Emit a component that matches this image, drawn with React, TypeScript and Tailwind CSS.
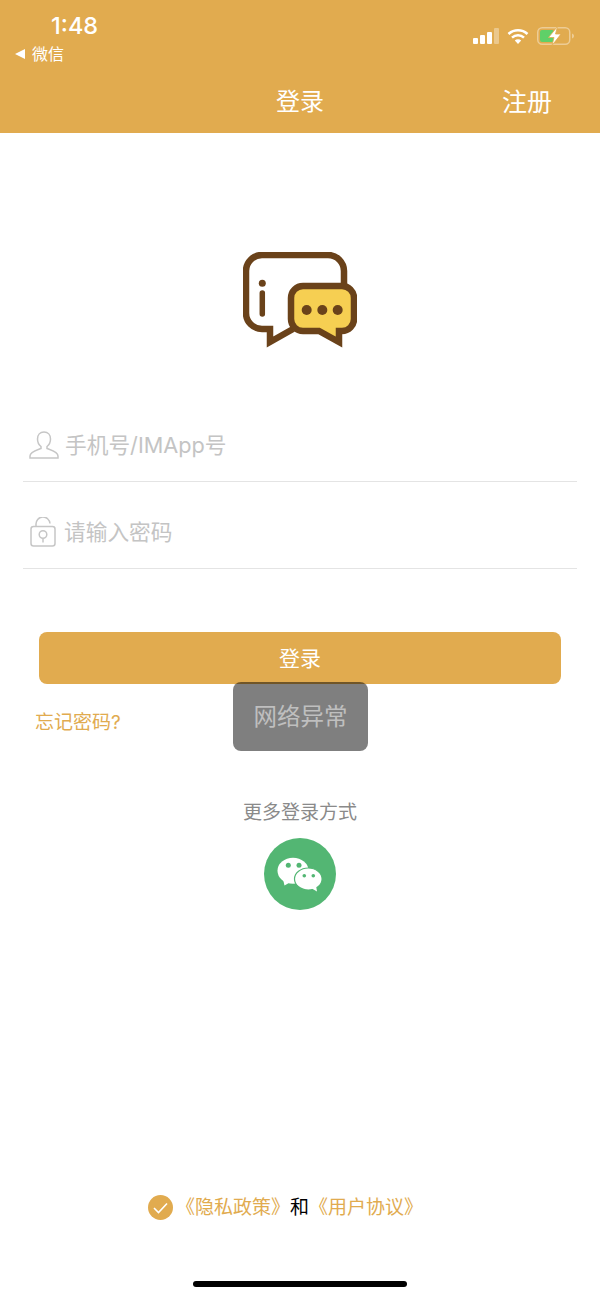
const cjk = "font-['Inter','Noto_Sans_CJK_SC',sans-serif]"

function StatusIcons() {
  return (
    <div className="flex items-center gap-[8px]">
      <svg width="26" height="16" viewBox="0 0 26 16" fill="#fff">
        <rect x="0" y="10" width="5" height="6" rx="1" />
        <rect x="7" y="7" width="5" height="9" rx="1" />
        <rect x="14" y="4" width="5" height="12" rx="1" />
        <rect x="21" y="0" width="5" height="16" rx="1" opacity="0.35" />
      </svg>
      <svg width="22" height="16" viewBox="0 0 22 16" fill="none" stroke="#fff" strokeWidth="2.6">
        <path d="M1.5 6a14 14 0 0 1 19 0" />
        <path d="M5 9.6a9 9 0 0 1 12 0" />
        <path d="M11 16l-3.2-3.4a4.6 4.6 0 0 1 6.4 0z" fill="#fff" stroke="none" />
      </svg>
      <svg width="38" height="20" viewBox="0 0 38 20" fill="none">
        <rect x="0.75" y="1.75" width="32" height="16.5" rx="4.5" stroke="#fff" strokeOpacity="0.4" strokeWidth="1.5" />
        <rect x="3" y="4" width="14" height="12" rx="2" fill="#5fd068" />
        <path d="M35 7.5c1.4.4 2 1.3 2 2.5s-.6 2.100-2 2.500z" fill="#fff" fillOpacity="0.4" />
        <path d="M20.500 0.500L11.500 11.500h5.500l-2 8 9-11.500h-5.500z" fill="#fff" stroke="#e1ab4f" strokeWidth="0.8" />
      </svg>
    </div>
  )
}

function AppLogo() {
  return (
    <svg width="114" height="96" viewBox="0 0 114 96" fill="none" stroke="#6a421a" strokeWidth="6.500" strokeLinejoin="miter">
      <path d="M101 34V19a16 16 0 0 0-16-16H19A16 16 0 0 0 3 19v42a16 16 0 0 0 16 16h8v13l23-13" />
      <path
        d="M60 34h39a12 12 0 0 1 12 12v21a12 12 0 0 1-12 12h-3v11L76 79H60a12 12 0 0 1-12-12V46a12 12 0 0 1 12-12z"
        fill="#f6cf52"
      />
      <circle cx="19.300" cy="31.300" r="3.500" fill="#6a421a" stroke="none" />
      <path d="M19.300 41v21" strokeWidth="5.500" strokeLinecap="round" />
      <g fill="#6a421a" stroke="none">
        <circle cx="63.700" cy="58" r="5" />
        <circle cx="79.300" cy="58" r="5" />
        <circle cx="94.700" cy="58" r="5" />
      </g>
    </svg>
  )
}

function PersonIcon() {
  return (
    <svg width="30" height="28" viewBox="0 0 30 28" fill="none" stroke="#c6c6c6" strokeWidth="1.5">
      <path d="M15 1c-4 0-6.500 3-6.500 7 0 3 1.500 6 3.500 7.500v2c-4 1.500-11 3-11 7.500v2h28v-2c0-4.500-7-6-11-7.500v-2c2-1.500 3.500-4.500 3.500-7.500 0-4-2.500-7-6.500-7z" />
    </svg>
  )
}

function LockIcon() {
  return (
    <svg width="26" height="30" viewBox="0 0 26 30" fill="none" stroke="#c6c6c6" strokeWidth="1.5">
      <path d="M6 9V7.500a7 7 0 0 1 14-1" />
      <rect x="1" y="9.500" width="24" height="19.500" rx="2.500" />
      <circle cx="13" cy="17.500" r="3.800" />
      <path d="M13 21.500v4" />
    </svg>
  )
}

function WechatBadge() {
  return (
    <div className="flex h-[72px] w-[72px] items-center justify-center rounded-full bg-[#53b673]">
      <svg width="72" height="72" viewBox="0 0 72 72">
        <ellipse cx="29" cy="32.700" rx="15.500" ry="13" fill="#fff" />
        <path d="M19 41l1.500 6.500 7-4z" fill="#fff" />
        <circle cx="24.300" cy="27.300" r="2.500" fill="#53b673" />
        <circle cx="35" cy="27.300" r="2.500" fill="#53b673" />
        <ellipse cx="44.300" cy="41" rx="13.800" ry="11" fill="#fff" stroke="#53b673" strokeWidth="1.200" />
        <path d="M47 50l6 3.500-1-6z" fill="#fff" />
        <circle cx="40.300" cy="37.700" r="1.800" fill="#53b673" />
        <circle cx="49.300" cy="37.700" r="1.800" fill="#53b673" />
      </svg>
    </div>
  )
}

export default function App() {
  return (
    <div className={`relative flex h-[1299px] w-[600px] flex-col overflow-hidden bg-white ${cjk}`}>
      <header className="flex h-[133px] shrink-0 flex-col bg-[#e1ab4f] text-white">
        <div className="flex h-[67px] items-start justify-between pr-[25px]">
          <div className="pl-[15px] pt-[11px]">
            <div className="pl-[36px] text-[23.500px] leading-[30px] font-medium">1:48</div>
            <div className="flex items-center gap-[7px] pt-[1px] text-[16px] leading-[24px]">
              <span className="h-0 w-0 border-y-[5px] border-r-[10px] border-y-transparent border-r-white" />
              <span>微信</span>
            </div>
          </div>
          <div className="pt-[26px]">
            <StatusIcons />
          </div>
        </div>
        <div className="relative flex h-[66px] items-center justify-center pt-[4px]">
          <span className="text-[24px] leading-[32px]">登录</span>
          <span className="absolute right-[48px] text-[25px] leading-[32px]">注册</span>
        </div>
      </header>

      <main className="flex flex-1 flex-col">
        <div className="flex justify-center pt-[119px]">
          <AppLogo />
        </div>

        <div className="mx-[23px] mt-[47px]">
          <div className="flex h-[87px] items-center gap-[6px] border-b border-[#e4e4e4] pl-[6px] pt-[14px]">
            <PersonIcon />
            <span className="text-[21.700px] text-[#c4c4c4]">手机号/IMApp号</span>
          </div>
          <div className="flex h-[87px] items-center gap-[8px] border-b border-[#e4e4e4] pl-[7px] pt-[14px]">
            <LockIcon />
            <span className="text-[21.700px] text-[#c4c4c4]">请输入密码</span>
          </div>
        </div>

        <button className="mx-[39px] mt-[63px] h-[52px] rounded-lg bg-[#e1ab4f] pt-[2px] text-[21px] text-white">登录</button>

        <div className="mt-[27px] pl-[35px] text-[19px] leading-[24px] text-[#e1ab4f]">忘记密码?</div>

        <div className="mt-[64px] text-center text-[19px] leading-[28px] text-[#8a8a8a]">更多登录方式</div>
        <div className="mt-[11px] flex justify-center">
          <WechatBadge />
        </div>

        <div className="mt-auto flex items-center justify-center gap-[3px] pb-[77px] pr-[29px]">
          <span className="flex h-[25px] w-[25px] items-center justify-center rounded-full bg-[#e1ab4f]">
            <svg width="15" height="12" viewBox="0 0 15 12" fill="none" stroke="#fff" strokeWidth="1.600">
              <path d="M1 6l4.500 4.500L14 1.500" />
            </svg>
          </span>
          <p className="pt-[1px] text-[19px] leading-[28px] text-[#e1ab4f]">
            《隐私政策》<span className="text-black">和</span>《用户协议》
          </p>
        </div>
      </main>

      <div className="absolute bottom-[12px] left-[193px] h-[6px] w-[214px] rounded-full bg-black" />

      {/* toast sits over the login button */}
      <div className="absolute left-[233px] top-[682px] flex h-[69px] w-[135px] items-center justify-center rounded-lg bg-black/50 text-[23.500px] text-white/50">
        网络异常
      </div>
    </div>
  )
}
